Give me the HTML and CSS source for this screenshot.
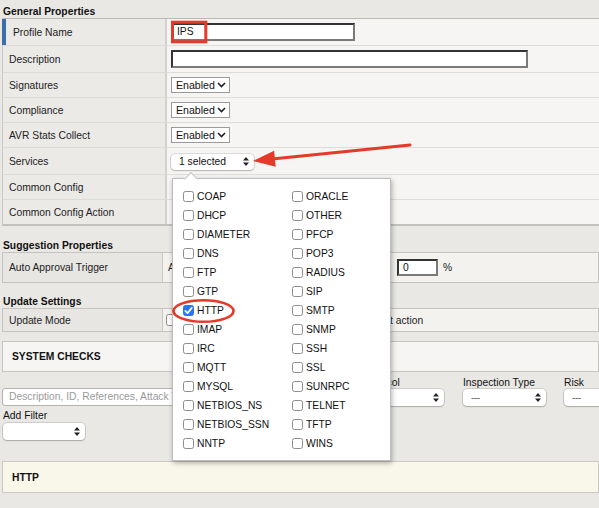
FILE: index.html
```html
<!DOCTYPE html>
<html>
<head>
<meta charset="utf-8">
<title>IPS Profile</title>
<link rel="stylesheet" href="styles.css">
</head>
<body>
<div class="page">
  <div class="sec-title t1">General Properties</div>
  <div class="tbl gp">
    <div class="row r27"><div class="lbl mark">Profile Name</div><div class="val"><div class="txt w-name">IPS</div></div></div>
    <div class="row r27"><div class="lbl">Description</div><div class="val"><div class="txt w-desc"></div></div></div>
    <div class="row r25"><div class="lbl">Signatures</div><div class="val"><div class="sel">Enabled<svg width="9" height="6" viewBox="0 0 9 6"><path d="M1 1l3.5 3.5L8 1" fill="none" stroke="#222" stroke-width="1.6"/></svg></div></div></div>
    <div class="row r25"><div class="lbl">Compliance</div><div class="val"><div class="sel">Enabled<svg width="9" height="6" viewBox="0 0 9 6"><path d="M1 1l3.5 3.5L8 1" fill="none" stroke="#222" stroke-width="1.6"/></svg></div></div></div>
    <div class="row r25"><div class="lbl">AVR Stats Collect</div><div class="val"><div class="sel">Enabled<svg width="9" height="6" viewBox="0 0 9 6"><path d="M1 1l3.5 3.5L8 1" fill="none" stroke="#222" stroke-width="1.6"/></svg></div></div></div>
    <div class="row r27"><div class="lbl">Services</div><div class="val"><div class="msel w-svc">1 selected<svg width="6" height="9" viewBox="0 0 6 9"><path d="M3 0L6 3.6H0Z M3 9L0 5.4H6Z" fill="#222"/></svg></div></div></div>
    <div class="row r25"><div class="lbl">Common Config</div><div class="val"></div></div>
    <div class="row r24 last"><div class="lbl">Common Config Action</div><div class="val"></div></div>
  </div>

  <div class="sec-title t2">Suggestion Properties</div>
  <div class="tbl box2 h31">
    <div class="row2"><div class="lbl2">Auto Approval Trigger</div><div class="val2"><span class="lead w-aa"><span>Approve after suggestions exceed</span></span><div class="txt w-pct">0</div><span class="pct">%</span></div></div>
  </div>

  <div class="sec-title t3">Update Settings</div>
  <div class="tbl box2 h24">
    <div class="row2"><div class="lbl2">Update Mode</div><div class="val2"><span class="cb"></span><span class="lead w-um">Automatic, keep defaul</span>t action</div></div>
  </div>

  <div class="panel sys">SYSTEM CHECKS</div>

  <div class="filters">
    <div class="fcol"><div class="search">Description, ID, References, Attack Type</div></div>
    <div class="fcol f-proto"><div class="flbl">Protocol</div><div class="msel w-proto">---<svg width="6" height="9" viewBox="0 0 6 9"><path d="M3 0L6 3.6H0Z M3 9L0 5.4H6Z" fill="#222"/></svg></div></div>
    <div class="fcol f-insp"><div class="flbl">Inspection Type</div><div class="msel w-insp"><span class="dash">---</span><svg width="6" height="9" viewBox="0 0 6 9"><path d="M3 0L6 3.6H0Z M3 9L0 5.4H6Z" fill="#222"/></svg></div></div>
    <div class="fcol f-risk"><div class="flbl">Risk</div><div class="msel w-risk"><span class="dash">---</span><svg width="6" height="9" viewBox="0 0 6 9"><path d="M3 0L6 3.6H0Z M3 9L0 5.4H6Z" fill="#222"/></svg></div></div>
  </div>
  <div class="flbl addf">Add Filter</div>
  <div class="msel w-add"><span></span><svg width="6" height="9" viewBox="0 0 6 9"><path d="M3 0L6 3.6H0Z M3 9L0 5.4H6Z" fill="#222"/></svg></div>

  <div class="panel http">HTTP</div>
</div>

<div class="popup">
  <div class="opts">
    <div class="opt"><span class="cb"></span>COAP</div>
    <div class="opt"><span class="cb"></span>DHCP</div>
    <div class="opt"><span class="cb"></span>DIAMETER</div>
    <div class="opt"><span class="cb"></span>DNS</div>
    <div class="opt"><span class="cb"></span>FTP</div>
    <div class="opt"><span class="cb"></span>GTP</div>
    <div class="opt"><span class="cb on"><svg width="11" height="11" viewBox="0 0 11 11"><path d="M2.3 5.8l2.2 2.3 4.3-5.2" fill="none" stroke="#fff" stroke-width="1.7" stroke-linecap="round" stroke-linejoin="round"/></svg></span>HTTP</div>
    <div class="opt"><span class="cb"></span>IMAP</div>
    <div class="opt"><span class="cb"></span>IRC</div>
    <div class="opt"><span class="cb"></span>MQTT</div>
    <div class="opt"><span class="cb"></span>MYSQL</div>
    <div class="opt"><span class="cb"></span>NETBIOS_NS</div>
    <div class="opt"><span class="cb"></span>NETBIOS_SSN</div>
    <div class="opt"><span class="cb"></span>NNTP</div>
    <div class="opt"><span class="cb"></span>ORACLE</div>
    <div class="opt"><span class="cb"></span>OTHER</div>
    <div class="opt"><span class="cb"></span>PFCP</div>
    <div class="opt"><span class="cb"></span>POP3</div>
    <div class="opt"><span class="cb"></span>RADIUS</div>
    <div class="opt"><span class="cb"></span>SIP</div>
    <div class="opt"><span class="cb"></span>SMTP</div>
    <div class="opt"><span class="cb"></span>SNMP</div>
    <div class="opt"><span class="cb"></span>SSH</div>
    <div class="opt"><span class="cb"></span>SSL</div>
    <div class="opt"><span class="cb"></span>SUNRPC</div>
    <div class="opt"><span class="cb"></span>TELNET</div>
    <div class="opt"><span class="cb"></span>TFTP</div>
    <div class="opt"><span class="cb"></span>WINS</div>
  </div>
</div>

<svg class="annot" width="599" height="508" viewBox="0 0 599 508">
  <rect x="172.5" y="22.2" width="33.3" height="19.6" fill="none" stroke="#e5392a" stroke-width="3"/>
  <ellipse cx="203.5" cy="311" rx="30" ry="10.8" fill="none" stroke="#e5392a" stroke-width="2.6"/>
  <line x1="410" y1="145" x2="272" y2="159" stroke="#e5392a" stroke-width="3" stroke-linecap="round"/>
  <polygon points="253,161 274.1,150.7 275.7,166.7" fill="#e5392a"/>
</svg>
</body>
</html>
```
FILE: styles.css
```css
* { box-sizing: border-box; }
html, body { margin: 0; padding: 0; }
body {
  width: 599px;
  height: 508px;
  overflow: hidden;
  position: relative;
  background: #e9e8e4;
  font-family: "Liberation Sans", Arial, sans-serif;
  font-size: 10.3px;
  color: #222;
}
.page { width: 599px; }

.sec-title { font-weight: bold; color: #111; padding-left: 3px; }
.t1 { height: 18px; padding-top: 6px; line-height: 12px; }
.t2 { height: 26px; padding-top: 14px; line-height: 12px; }
.t3 { height: 25px; padding-top: 12px; line-height: 14px; }

.tbl { margin-left: 2px; border-left: 1px solid #c9c8c4; }
.gp { border-top: 1px solid #b9b8b4; border-bottom: 2px solid #c2c1bd; }
.row { display: flex; border-bottom: 1px solid #dddcd8; }
.row.last { border-bottom: none; }
.r27 { height: 27px; }
.r25 { height: 25px; }
.r24 { height: 24px; }
.lbl {
  width: 164px;
  flex: none;
  background: #ebeae7;
  border-right: 2px solid #d2d1cd;
  padding-left: 6px;
  display: flex;
  align-items: center;
}
.lbl.mark { border-left: 4px solid #3b6ea6; margin-left: -1px; padding-left: 7px; width: 165px; }
.val {
  flex: 1;
  background: #f6f5f3;
  padding-left: 4px;
  display: flex;
  align-items: center;
}

.txt {
  height: 18px;
  background: #fff;
  border: 2px solid;
  border-color: #333 #7a7a7a #7a7a7a #333;
  padding-left: 4px;
  line-height: 14px;
  color: #111;
}
.w-name { width: 184px; }
.w-desc { width: 357px; }
.w-pct { width: 41px; height: 17px; line-height: 13px; flex: none; }

.sel {
  width: 59px;
  height: 16px;
  background: #fff;
  border: 1px solid #9a9a9a;
  display: flex;
  align-items: center;
  justify-content: space-between;
  padding: 0 3px 0 4px;
  color: #111;
  font-size: 10.6px;
}

.msel {
  height: 17px;
  background: #fff;
  border-radius: 4px;
  box-shadow: 0 0 0 0.6px rgba(0,0,0,0.22), 0 1px 1.5px rgba(0,0,0,0.18);
  display: flex;
  align-items: center;
  justify-content: space-between;
  padding: 0 5px 0 8px;
  color: #111;
}
.w-svc { width: 83px; height: 16px; margin-top: 1px; }
.w-proto { width: 82px; }
.w-insp { width: 83px; }
.w-risk { width: 83px; }
.w-add { width: 82px; margin-left: 3px; margin-top: 1px; }
.dash { color: #666; letter-spacing: -0.5px; }

.box2 { border: 1px solid #c4c3bf; }
.h31 { height: 31px; }
.h24 { height: 24px; }
.row2 { display: flex; height: 100%; }
.lbl2 {
  width: 160px;
  flex: none;
  background: #e7e6e2;
  border-right: 1px solid #c9c8c4;
  padding-left: 6px;
  display: flex;
  align-items: center;
}
.val2 {
  flex: 1;
  background: #f3f2ef;
  display: flex;
  align-items: center;
  padding-left: 5px;
  white-space: nowrap;
  overflow: hidden;
}
.lead { display: block; white-space: nowrap; flex: none; }
.w-aa { width: 220px; margin-right: 9px; }
.pct { margin-left: 5px; }
.box2 .cb { margin-left: -2px; width: 12px; height: 12px; }
.w-um { width: 206px; margin-left: 3px; margin-right: 3px; text-align: right; }

.panel {
  margin-left: 2px;
  border: 1px solid #c6c5c1;
  font-weight: bold;
  padding-left: 9px;
  display: flex;
  align-items: center;
  color: #111;
}
.sys { margin-top: 9px; height: 31px; background: #f6f5f3; }
.http { margin-top: 21px; height: 32px; background: #f9f6ea; border-color: #cbc9c1; }

.filters { display: flex; align-items: flex-end; margin-top: 5px; }
.fcol { display: flex; flex-direction: column; }
.flbl { line-height: 12px; height: 12px; color: #111; }
.search {
  margin-left: 2px;
  width: 340px;
  height: 18px;
  background: #fff;
  border: 1px solid #b4b3af;
  border-radius: 3px;
  padding-left: 6px;
  line-height: 16px;
  color: #9a9a9a;
  white-space: nowrap;
  overflow: hidden;
}
.f-proto { margin-left: 20px; }
.f-insp { margin-left: 19px; }
.f-risk { margin-left: 18px; }
.addf { margin-top: 4px; padding-left: 3px; }

.cb {
  display: inline-block;
  flex: none;
  width: 11px;
  height: 11px;
  border: 1px solid #8d8d8d;
  border-radius: 2.5px;
  background: #fff;
}
.cb.on { background: #2b74f0; border-color: #2b74f0; position: relative; }
.cb.on svg { position: absolute; left: -1px; top: -1px; }

.popup {
  position: absolute;
  left: 172px;
  top: 178px;
  width: 219px;
  height: 283px;
  background: #fff;
  border: 1px solid #bdbdbd;
  box-shadow: 1px 2px 5px rgba(0,0,0,0.3);
  padding: 8px 0 0 10px;
}
.popup::before {
  content: "";
  position: absolute;
  left: 13px;
  top: -5px;
  width: 9px;
  height: 9px;
  background: #fff;
  border-left: 1px solid #c4c4c4;
  border-top: 1px solid #c4c4c4;
  transform: rotate(45deg);
}
.opts {
  display: grid;
  grid-auto-flow: column;
  grid-template-rows: repeat(14, 19px);
  grid-template-columns: 109px 100px;
}
.opt { display: flex; align-items: center; gap: 3px; color: #111; line-height: 12px; }
.opt .cb { margin-top: -1px; }

.annot { position: absolute; left: 0; top: 0; pointer-events: none; }
```
